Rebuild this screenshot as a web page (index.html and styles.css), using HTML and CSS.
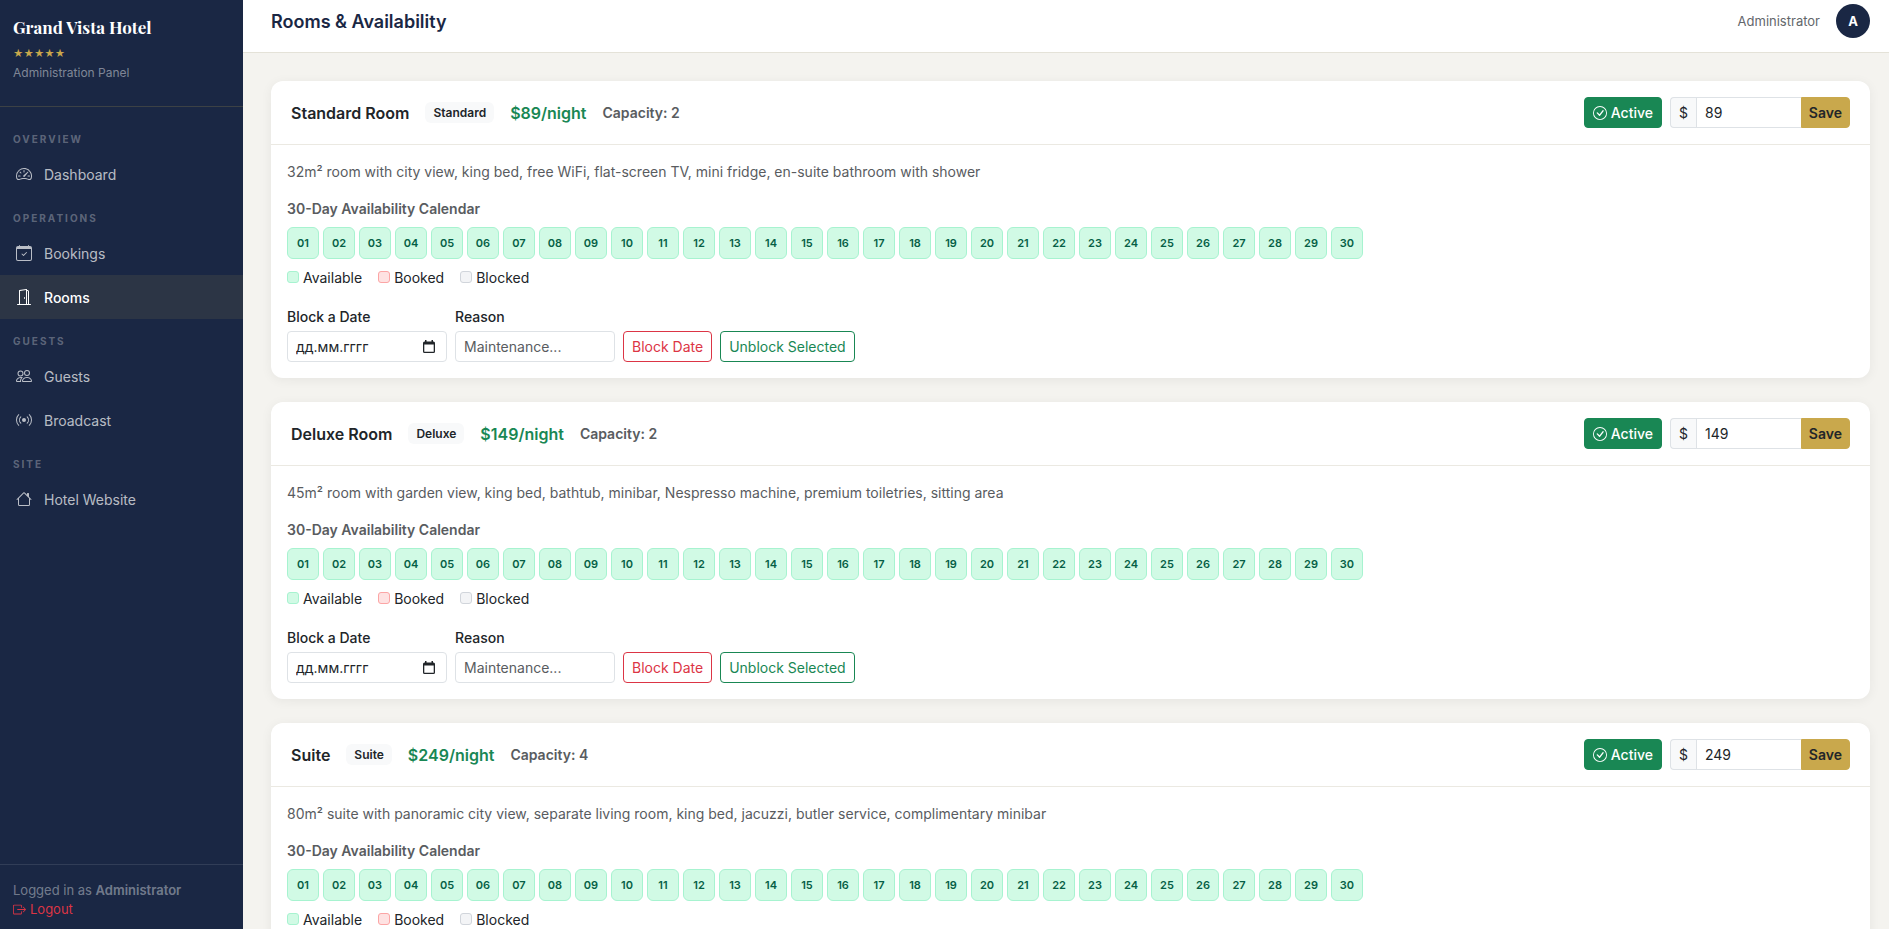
FILE: index.html
```html
<!DOCTYPE html>
<html lang="en">
<head>
<meta charset="utf-8">
<title>Rooms &amp; Availability</title>
<link rel="stylesheet" href="styles.css">
</head>
<body>
<aside class="sidebar">
  <div class="brand">
    <div class="brand-name">Grand Vista Hotel</div>
    <div class="brand-stars">★★★★★</div>
    <div class="brand-sub">Administration Panel</div>
  </div>
  <nav class="nav">
    <div class="nav-label">Overview</div>
    <a class="nav-link" href="#"><svg class="icon" viewBox="0 0 16 16"><path d="M8 4a.5.5 0 0 1 .5.5V6a.5.5 0 0 1-1 0V4.500A.5.5 0 0 1 8 4M3.732 5.732a.5.5 0 0 1 .707 0l.915.914a.5.5 0 1 1-.708.708l-.914-.915a.5.5 0 0 1 0-.707M2 10a.5.5 0 0 1 .5-.5h1.586a.5.5 0 0 1 0 1H2.500A.5.5 0 0 1 2 10m9.500 0a.5.5 0 0 1 .5-.5h1.500a.5.5 0 0 1 0 1H12a.5.5 0 0 1-.5-.5m.754-4.246a.389.389 0 0 0-.527-.020L7.547 9.310a.910.910 0 1 0 1.302 1.258l3.434-4.297a.389.389 0 0 0-.029-.518z"/><path fill-rule="evenodd" d="M0 10a8 8 0 1 1 15.547 2.661c-.442 1.253-1.845 1.602-2.932 1.250C11.309 13.488 9.475 13 8 13c-1.474 0-3.310.488-4.615.911-1.087.352-2.490.003-2.932-1.250A8 8 0 0 1 0 10m8-7a7 7 0 0 0-6.603 9.329c.203.575.923.876 1.680.630C4.397 12.533 6.358 12 8 12s3.604.532 4.923.960c.757.245 1.477-.056 1.680-.631A7 7 0 0 0 8 3"/></svg>Dashboard</a>
    <div class="nav-label">Operations</div>
    <a class="nav-link" href="#"><svg class="icon" viewBox="0 0 16 16"><path d="M10.854 7.146a.5.5 0 0 1 0 .708l-3 3a.5.5 0 0 1-.708 0l-1.500-1.500a.5.5 0 1 1 .708-.708L7.500 9.793l2.646-2.647a.5.5 0 0 1 .708 0"/><path d="M3.500 0a.5.5 0 0 1 .5.5V1h8V.5a.5.5 0 0 1 1 0V1h1a2 2 0 0 1 2 2v11a2 2 0 0 1-2 2H2a2 2 0 0 1-2-2V3a2 2 0 0 1 2-2h1V.5a.5.5 0 0 1 .5-.5M1 4v10a1 1 0 0 0 1 1h12a1 1 0 0 0 1-1V4z"/></svg>Bookings</a>
    <a class="nav-link active" href="#" aria-current="page"><svg class="icon" viewBox="0 0 16 16"><path d="M8.500 10c-.276 0-.5-.448-.5-1s.224-1 .5-1 .5.448.5 1-.224 1-.5 1"/><path d="M10.828.122A.5.5 0 0 1 11 .5V1h.5A1.500 1.500 0 0 1 13 2.500V15h1.500a.5.5 0 0 1 0 1h-13a.5.5 0 0 1 0-1H3V1.500a.5.5 0 0 1 .43-.495l7-1a.5.5 0 0 1 .398.117M11.500 2H11v13h1V2.500a.5.5 0 0 0-.5-.5M4 1.934V15h6V1.077z"/></svg>Rooms</a>
    <div class="nav-label">Guests</div>
    <a class="nav-link" href="#"><svg class="icon" viewBox="0 0 16 16"><path d="M15 14s1 0 1-1-1-4-5-4-5 3-5 4 1 1 1 1zm-7.978-1L7 12.996c.001-.264.167-1.030.760-1.720C8.312 10.629 9.282 10 11 10c1.717 0 2.687.630 3.240 1.276.593.690.758 1.457.760 1.720l-.008.002-.014.002zM11 7a2 2 0 1 0 0-4 2 2 0 0 0 0 4m3-2a3 3 0 1 1-6 0 3 3 0 0 1 6 0M6.936 9.280a6 6 0 0 0-1.230-.247A7 7 0 0 0 5 9c-4 0-5 3-5 4q0 1 1 1h4.216A2.240 2.240 0 0 1 5 13c0-1.010.377-2.042 1.090-2.904.243-.294.526-.569.846-.816M4.920 10A5.500 5.500 0 0 0 4 13H1c0-.260.164-1.030.760-1.724.545-.636 1.492-1.256 3.160-1.275zM1.500 5.500a3 3 0 1 1 6 0 3 3 0 0 1-6 0m3-2a2 2 0 1 0 0 4 2 2 0 0 0 0-4"/></svg>Guests</a>
    <a class="nav-link" href="#"><svg class="icon" viewBox="0 0 16 16"><path d="M3.050 3.050a7 7 0 0 0 0 9.900.5.5 0 0 1-.707.707 8 8 0 0 1 0-11.314.5.5 0 0 1 .707.707m2.122 2.122a4 4 0 0 0 0 5.656.5.5 0 1 1-.708.708 5 5 0 0 1 0-7.072.5.5 0 0 1 .708.708m5.656-.708a.5.5 0 0 1 .708 0 5 5 0 0 1 0 7.072.5.5 0 1 1-.708-.708 4 4 0 0 0 0-5.656.5.5 0 0 1 0-.708m2.122-2.120a.5.5 0 0 1 .707 0 8 8 0 0 1 0 11.313.5.5 0 0 1-.707-.707 7 7 0 0 0 0-9.900.5.5 0 0 1 0-.707zM10 8a2 2 0 1 1-4 0 2 2 0 0 1 4 0"/></svg>Broadcast</a>
    <div class="nav-label">Site</div>
    <a class="nav-link" href="#"><svg class="icon" viewBox="0 0 16 16"><path d="M8.707 1.500a1 1 0 0 0-1.414 0L.646 8.146a.5.5 0 0 0 .708.708L2 8.207V13.500A1.500 1.500 0 0 0 3.500 15h9a1.500 1.500 0 0 0 1.500-1.500V8.207l.646.647a.5.5 0 0 0 .708-.708L13 5.793V2.500a.5.5 0 0 0-.5-.5h-1a.5.5 0 0 0-.5.5v1.293zM13 7.207V13.500a.5.5 0 0 1-.5.5h-9a.5.5 0 0 1-.5-.5V7.207l5-5z"/></svg>Hotel Website</a>
  </nav>
  <div class="sidebar-foot">
    <div>Logged in as <strong>Administrator</strong></div>
    <a class="logout" href="#"><svg class="icon-sm" viewBox="0 0 16 16"><path fill-rule="evenodd" d="M10 12.500a.5.5 0 0 1-.5.5h-8a.5.5 0 0 1-.5-.5v-9a.5.5 0 0 1 .5-.5h8a.5.5 0 0 1 .5.5v2a.5.5 0 0 0 1 0v-2A1.500 1.500 0 0 0 9.500 2h-8A1.500 1.500 0 0 0 0 3.500v9A1.500 1.500 0 0 0 1.500 14h8a1.500 1.500 0 0 0 1.500-1.500v-2a.5.5 0 0 0-1 0z"/><path fill-rule="evenodd" d="M15.854 8.354a.5.5 0 0 0 0-.708l-3-3a.5.5 0 0 0-.708.708L14.293 7.500H5.500a.5.5 0 0 0 0 1h8.793l-2.147 2.146a.5.5 0 0 0 .708.708z"/></svg>Logout</a>
  </div>
</aside>
<div class="main">
  <header class="topbar">
    <h1 class="page-title">Rooms &amp; Availability</h1>
    <div class="user"><span>Administrator</span><span class="avatar">A</span></div>
  </header>
  <main class="content" id="rooms"></main>
</div>
<script src="rooms.js"></script>
</body>
</html>
```
FILE: styles.css
```css
*, *::before, *::after { box-sizing: border-box; }

body {
  margin: 0;
  height: 100vh;
  display: flex;
  overflow: hidden;
  background: #f4f3ef;
  color: #212529;
  font: 14px/21px Inter, "Noto Sans", sans-serif;
}

a { color: inherit; text-decoration: none; }
button, input { font: inherit; color: inherit; margin: 0; }
svg { fill: currentColor; flex: none; }

/* Sidebar */
.sidebar {
  width: 243px;
  flex: none;
  display: flex;
  flex-direction: column;
  background: #1a2744;
}
.brand {
  padding: 16px 13px 23px;
  border-bottom: 1px solid rgba(201, 168, 76, .2);
}
.brand-name {
  font: 700 17px/22px "Playfair Display", "Liberation Serif", serif;
  color: #fff;
}
.brand-stars { margin-top: 6px; font-size: 10px; line-height: 19px; color: #c9a84c; }
.brand-sub { font-size: 12px; line-height: 20px; color: rgba(255, 255, 255, .45); }

.nav { flex: 1; padding-top: 10px; }
.nav-label {
  padding: 14px 13px 5px;
  font-size: 10px;
  line-height: 16px;
  font-weight: 700;
  letter-spacing: 2px;
  text-transform: uppercase;
  color: rgba(255, 255, 255, .3);
}
.nav-link {
  display: flex;
  align-items: center;
  gap: 12px;
  height: 44px;
  padding: 0 16px;
  color: rgba(255, 255, 255, .7);
}
.nav-link.active { background: #2c3545; color: #fff; font-weight: 500; }
.icon { width: 16px; height: 16px; }

.sidebar-foot {
  padding: 16px 13px 10px;
  border-top: 1px solid rgba(255, 255, 255, .1);
  font-size: 13px;
  line-height: 19px;
  color: rgba(255, 255, 255, .4);
}
.sidebar-foot strong { font-weight: 600; }
.logout { display: flex; align-items: center; gap: 4px; color: #dc3545; }
.icon-sm { width: 13px; height: 13px; }

/* Main column */
.main { flex: 1; min-width: 0; }
.topbar {
  display: flex;
  align-items: center;
  justify-content: space-between;
  padding: 4px 19px 14px 28px;
  background: #fff;
  border-bottom: 1px solid #e4e2d8;
}
.page-title { margin: 0; font-size: 18px; font-weight: 600; line-height: 27px; color: #1a2744; }
.user { display: flex; align-items: center; gap: 16px; font-size: 13px; color: #63676b; }
.avatar {
  width: 34px;
  height: 34px;
  border-radius: 50%;
  background: #1a2744;
  color: #fff;
  font-weight: 700;
  line-height: 34px;
  text-align: center;
}
.content {
  display: flex;
  flex-direction: column;
  gap: 24px;
  padding: 28px 19px 28px 28px;
}

/* Room card */
.card {
  background: #fff;
  border-radius: 12px;
  box-shadow: 0 2px 12px rgba(0, 0, 0, .06);
}
.card-head {
  display: flex;
  align-items: center;
  justify-content: space-between;
  padding: 16px 20px;
  border-bottom: 1px solid #ebe9e2;
}
.facts, .actions { display: flex; align-items: center; }
.facts { gap: 16px; font-weight: 600; }
.actions { gap: 8px; }
.room-name, .price { margin: 0; font-size: 16px; line-height: 24px; font-weight: 600; }
.price { color: #198754; }
.badge {
  padding: 0 8px;
  border-radius: 6px;
  background: #f8f9fa;
  font-size: 12px;
}
.capacity, .desc, .cal-title { color: #595c5f; }
.card-body { padding: 16px; }
.desc { margin: 0 0 16px; }
.cal-title { margin: 0 0 8px; font-size: 14px; font-weight: 600; }

.calendar { display: flex; flex-wrap: wrap; gap: 4px; }
.day {
  width: 32px;
  height: 32px;
  border: 1px solid #a7f3d0;
  border-radius: 6px;
  background: #d1fae5;
  color: #065f46;
  font-size: 11px;
  line-height: 30px;
  font-weight: 600;
  text-align: center;
}

.legend { display: flex; gap: 16px; margin-top: 8px; }
.legend span { display: flex; align-items: center; gap: 4px; }
.legend span::before {
  content: "";
  width: 12px;
  height: 12px;
  margin-bottom: 2px;
  border: 1px solid;
  border-radius: 3px;
}
.legend .available::before { background: #d1fae5; border-color: #a7f3d0; }
.legend .booked::before { background: #fee2e2; border-color: #fca5a5; }
.legend .blocked::before { background: #f3f4f6; border-color: #d1d5db; }

/* Forms */
.block-form { display: flex; align-items: flex-end; gap: 8px; margin-top: 18px; }
.field { width: 160px; }
.field label { display: block; margin-bottom: 4px; font-weight: 500; }
.control {
  display: block;
  width: 100%;
  height: 31px;
  padding: 0 8px;
  border: 1px solid #dee2e6;
  border-radius: 4px;
  background: #fff;
}
.control::placeholder { color: #595c5f; opacity: 1; }
.date { display: flex; align-items: center; }
.date input { flex: 1; min-width: 0; padding: 0; border: 0; background: none; outline: 0; }
.date input::placeholder { color: #212529; opacity: 1; }
.picker { display: flex; padding: 0 3px; border: 0; background: none; }
.picker svg { width: 12px; height: 14px; }

.btn {
  display: flex;
  align-items: center;
  gap: 4px;
  height: 31px;
  padding: 0 8px;
  border: 1px solid currentColor;
  border-radius: 4px;
  background: #fff;
  white-space: nowrap;
}
.btn-danger { color: #dc3545; }
.btn-outline { color: #198754; }
.btn-active { border-color: #198754; background: #198754; color: #fff; font-weight: 500; }
.btn-active svg { width: 14px; height: 14px; }
.price-form { display: flex; width: 180px; }
.prefix {
  padding: 0 8px;
  border: 1px solid #dee2e6;
  border-right: 0;
  border-radius: 4px 0 0 4px;
  background: #f8f9fa;
  line-height: 29px;
}
.price-form .control { flex: 1; min-width: 0; border-right: 0; border-radius: 0; }
.btn-save {
  padding: 0 7px;
  border-color: #c9a84c;
  border-radius: 0 4px 4px 0;
  background: #c9a84c;
  font-weight: 600;
}
```
FILE: rooms.js
```js
const rooms = [
  { name: "Standard Room", type: "Standard", price: 89, capacity: 2,
    desc: "32m² room with city view, king bed, free WiFi, flat-screen TV, mini fridge, en-suite bathroom with shower" },
  { name: "Deluxe Room", type: "Deluxe", price: 149, capacity: 2,
    desc: "45m² room with garden view, king bed, bathtub, minibar, Nespresso machine, premium toiletries, sitting area" },
  { name: "Suite", type: "Suite", price: 249, capacity: 4,
    desc: "80m² suite with panoramic city view, separate living room, king bed, jacuzzi, butler service, complimentary minibar" }
];

const days = Array.from({ length: 30 }, (_, i) =>
  `<div class="day">${String(i + 1).padStart(2, "0")}</div>`).join("");

document.getElementById("rooms").innerHTML = rooms.map((r, i) => `
<section class="card">
  <div class="card-head">
    <div class="facts">
      <h2 class="room-name">${r.name}</h2>
      <span class="badge">${r.type}</span>
      <span class="price">$${r.price}/night</span>
      <span class="capacity">Capacity: ${r.capacity}</span>
    </div>
    <div class="actions">
      <button class="btn btn-active" type="button"><svg viewBox="0 0 16 16"><path d="M8 15A7 7 0 1 1 8 1a7 7 0 0 1 0 14m0 1A8 8 0 1 0 8 0a8 8 0 0 0 0 16"/><path d="m10.970 4.970-.020.022-3.473 4.425-2.093-2.094a.75.75 0 0 0-1.060 1.060L6.970 11.030a.75.75 0 0 0 1.079-.020l3.992-4.990a.75.75 0 0 0-1.071-1.050"/></svg>Active</button>
      <form class="price-form">
        <label class="prefix" for="price-${i}">$</label>
        <input class="control" id="price-${i}" type="text" inputmode="numeric" value="${r.price}">
        <button class="btn btn-save" type="button">Save</button>
      </form>
    </div>
  </div>
  <div class="card-body">
    <p class="desc">${r.desc}</p>
    <h3 class="cal-title">30-Day Availability Calendar</h3>
    <div class="calendar">${days}</div>
    <div class="legend"><span class="available">Available</span><span class="booked">Booked</span><span class="blocked">Blocked</span></div>
    <form class="block-form">
      <div class="field">
        <label for="date-${i}">Block a Date</label>
        <div class="control date">
          <input id="date-${i}" type="text" placeholder="дд.мм.гггг">
          <button class="picker" type="button" aria-label="Open calendar"><svg viewBox="0 0 12 14"><path fill-rule="evenodd" d="M2 0h1.500v1.500h5V0H10v1.500h.5A1.500 1.500 0 0 1 12 3v8.500a1.500 1.500 0 0 1-1.500 1.500h-9A1.500 1.500 0 0 1 0 11.500V3a1.500 1.500 0 0 1 1.500-1.500H2zM1.300 4.500v7.200h9.400V4.500z"/></svg></button>
        </div>
      </div>
      <div class="field">
        <label for="reason-${i}">Reason</label>
        <input class="control" id="reason-${i}" type="text" placeholder="Maintenance...">
      </div>
      <button class="btn btn-danger" type="button">Block Date</button>
      <button class="btn btn-outline" type="button">Unblock Selected</button>
    </form>
  </div>
</section>`).join("");
```
